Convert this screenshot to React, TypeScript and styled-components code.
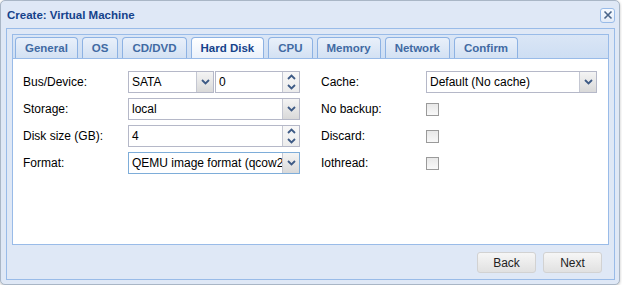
import styled, { createGlobalStyle } from "styled-components";

const GlobalStyle = createGlobalStyle`
  html, body {
    margin: 0;
    padding: 0;
    background: #ffffff;
  }
  * {
    box-sizing: border-box;
  }
`;

const tabs = ["General", "OS", "CD/DVD", "Hard Disk", "CPU", "Memory", "Network", "Confirm"];
const activeTab = "Hard Disk";

const Chevron = ({ up = false }: { up?: boolean }) => (
  <svg width="9" height="6" viewBox="0 0 9 6">
    <path
      d={up ? "M1 5 L4.5 1.5 L8 5" : "M1 1 L4.5 4.5 L8 1"}
      fill="none"
      stroke="#3d5a85"
      strokeWidth="1.8"
    />
  </svg>
);

const ComboField = ({ value, width, focused = false }: { value: string; width: number; focused?: boolean }) => (
  <FieldBox $width={width} $focused={focused}>
    <FieldText>{value}</FieldText>
    <Trigger>
      <Chevron />
    </Trigger>
  </FieldBox>
);

const SpinnerField = ({ value, width }: { value: string; width: number }) => (
  <FieldBox $width={width}>
    <FieldText>{value}</FieldText>
    <SpinTrigger>
      <SpinHalf>
        <Chevron up />
      </SpinHalf>
      <SpinHalf>
        <Chevron />
      </SpinHalf>
    </SpinTrigger>
  </FieldBox>
);

export default function App() {
  return (
    <>
      <GlobalStyle />
      <Window>
        <Header>
          <Title>Create: Virtual Machine</Title>
          <CloseButton>
            <svg width="10" height="10" viewBox="0 0 10 10">
              <path d="M1.5 1.5 L8.5 8.5 M8.5 1.5 L1.5 8.5" stroke="#4a6489" strokeWidth="1.6" />
            </svg>
          </CloseButton>
        </Header>
        <WindowBody>
          <TabBar>
            {tabs.map((t) => (
              <Tab key={t} $active={t === activeTab}>
                {t}
              </Tab>
            ))}
          </TabBar>
          <TabBody>
            <Columns>
              <Column>
                <Row>
                  <Label>Bus/Device:</Label>
                  <Pair>
                    <ComboField value="SATA" width={86} />
                    <SpinnerField value="0" width={85} />
                  </Pair>
                </Row>
                <Row>
                  <Label>Storage:</Label>
                  <ComboField value="local" width={172} />
                </Row>
                <Row>
                  <Label>Disk size (GB):</Label>
                  <SpinnerField value="4" width={172} />
                </Row>
                <Row>
                  <Label>Format:</Label>
                  <ComboField value="QEMU image format (qcow2)" width={172} focused />
                </Row>
              </Column>
              <Column>
                <Row>
                  <Label>Cache:</Label>
                  <ComboField value="Default (No cache)" width={171} />
                </Row>
                <Row>
                  <Label>No backup:</Label>
                  <Checkbox />
                </Row>
                <Row>
                  <Label>Discard:</Label>
                  <Checkbox />
                </Row>
                <Row>
                  <Label>Iothread:</Label>
                  <Checkbox />
                </Row>
              </Column>
            </Columns>
          </TabBody>
          <ButtonBar>
            <Button>Back</Button>
            <Button>Next</Button>
          </ButtonBar>
        </WindowBody>
      </Window>
    </>
  );
}

const Window = styled.div`
  width: 620px;
  height: 285px;
  display: flex;
  flex-direction: column;
  background: #dfe8f6;
  border: 1px solid #a9b6c6;
  border-radius: 5px;
  box-shadow: 0 1px 3px rgba(0, 0, 0, 0.25);
  padding: 0 4px 4px 5px;
  font-family: "Liberation Sans", Arial, sans-serif;
`;

const Header = styled.div`
  height: 27px;
  display: flex;
  align-items: center;
  justify-content: space-between;
  padding: 1px 0 0 1px;
`;

const Title = styled.div`
  font-size: 11.5px;
  font-weight: bold;
  color: #15428b;
`;

const CloseButton = styled.div`
  width: 15px;
  height: 15px;
  display: flex;
  align-items: center;
  justify-content: center;
  border: 1px solid #99bbe8;
  border-radius: 3px;
  background: linear-gradient(#f7faff, #e3ebf7);
`;

const WindowBody = styled.div`
  flex: 1;
  display: flex;
  flex-direction: column;
  border: 1px solid #99bbe8;
  background: #dfe8f6;
  padding: 5px 5px 0 5px;
`;

const TabBar = styled.div`
  display: flex;
  gap: 4px;
  height: 24px;
  padding: 2px 2px 0 2px;
  border: 1px solid #99bbe8;
  border-bottom: none;
  background: linear-gradient(#dae6f6, #cedef3);
`;

const Tab = styled.div<{ $active: boolean }>`
  height: 21px;
  padding: 0 9px;
  display: flex;
  align-items: center;
  font-size: 11.5px;
  font-weight: bold;
  color: ${(p) => (p.$active ? "#15428b" : "#416aa3")};
  border: 1px solid #8db2e3;
  border-bottom: none;
  border-radius: 4px 4px 0 0;
  background: ${(p) =>
    p.$active ? "linear-gradient(#ffffff, #eaf1fb)" : "linear-gradient(#e9f0fa, #d3e1f3)"};
`;

const TabBody = styled.div`
  height: 187px;
  background: #ffffff;
  border: 1px solid #99bbe8;
  padding: 12px 10px 0 10px;
`;

const Columns = styled.div`
  display: grid;
  grid-template-columns: 277px 277px;
  column-gap: 21px;
`;

const Column = styled.div`
  display: flex;
  flex-direction: column;
  gap: 5px;
`;

const Row = styled.div`
  display: flex;
  align-items: center;
  height: 22px;
`;

const Label = styled.div`
  width: 105px;
  flex-shrink: 0;
  font-size: 12px;
  color: #000000;
`;

const Pair = styled.div`
  display: flex;
  gap: 1px;
`;

const FieldBox = styled.div<{ $width: number; $focused?: boolean }>`
  width: ${(p) => p.$width}px;
  height: 22px;
  display: flex;
  border: 1px solid ${(p) => (p.$focused ? "#7eadd9" : "#b5b8c8")};
  background: #ffffff;
  overflow: hidden;
`;

const FieldText = styled.div`
  flex: 1;
  min-width: 0;
  padding: 0 3px;
  font-size: 12px;
  line-height: 20px;
  white-space: nowrap;
  overflow: hidden;
  color: #000000;
`;

const Trigger = styled.div`
  width: 17px;
  flex-shrink: 0;
  display: flex;
  align-items: center;
  justify-content: center;
  border-left: 1px solid #c4c7d2;
  background: linear-gradient(#f4f4f4, #d9d9d9);
`;

const SpinTrigger = styled.div`
  width: 17px;
  flex-shrink: 0;
  display: flex;
  flex-direction: column;
  border-left: 1px solid #c4c7d2;
  background: linear-gradient(#f8f8f8, #ececec);
`;

const SpinHalf = styled.div`
  flex: 1;
  display: flex;
  align-items: center;
  justify-content: center;
`;

const Checkbox = styled.div`
  width: 13px;
  height: 13px;
  border: 1px solid #9a9a9a;
  background: linear-gradient(#e8e8e8, #f8f8f8);
`;

const ButtonBar = styled.div`
  flex: 1;
  display: flex;
  justify-content: flex-end;
  align-items: flex-start;
  gap: 7px;
  padding: 7px 7px 0 0;
`;

const Button = styled.div`
  width: 59px;
  height: 21px;
  display: flex;
  align-items: center;
  justify-content: center;
  font-size: 12px;
  color: #222222;
  border: 1px solid #d2d2d2;
  border-radius: 3px;
  background: linear-gradient(#f6f6f6, #e1e1e1);
`;
